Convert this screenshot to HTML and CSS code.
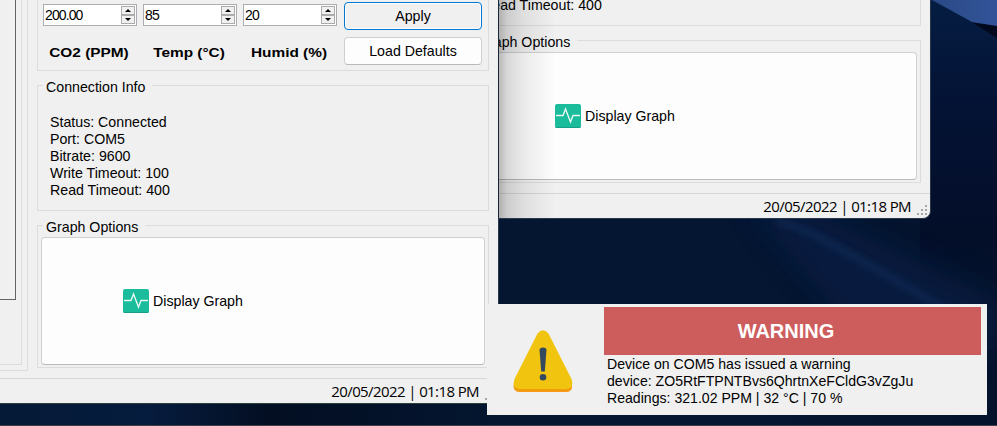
FILE: index.html
```html
<!DOCTYPE html>
<html lang="en">
<head>
<meta charset="utf-8">
<title>Sensor Monitor</title>
<link rel="stylesheet" href="styles.css">
</head>
<body>
<main class="desktop">
  <svg class="wallpaper" viewBox="0 0 997 426" preserveAspectRatio="none" aria-hidden="true">
    <defs>
      <linearGradient id="base" x1="0" y1="0" x2="1" y2="0">
        <stop offset="0" stop-color="#051a36"/><stop offset=".15" stop-color="#061c3e"/>
        <stop offset=".27" stop-color="#030e22"/><stop offset=".5" stop-color="#041630"/>
        <stop offset=".75" stop-color="#041632"/><stop offset="1" stop-color="#04132c"/>
      </linearGradient>
      <linearGradient id="side" x1="0" y1="0" x2="0" y2="1">
        <stop offset="0" stop-color="#051d42"/><stop offset=".4" stop-color="#041233"/><stop offset=".8" stop-color="#030e29"/><stop offset="1" stop-color="#030e29" stop-opacity="0"/>
      </linearGradient>
      <linearGradient id="petal" x1="0" y1="0" x2="1" y2="0">
        <stop offset="0" stop-color="#294984"/><stop offset="1" stop-color="#33549a"/>
      </linearGradient>
      <filter id="soft" filterUnits="userSpaceOnUse" x="600" y="100" width="500" height="350"><feGaussianBlur stdDeviation="14"/></filter>
      <filter id="streak" filterUnits="userSpaceOnUse" x="700" y="180" width="297" height="180"><feGaussianBlur stdDeviation="3"/></filter>
    </defs>
    <rect width="997" height="426" fill="url(#base)"/>
    <rect x="920" width="77" height="290" fill="url(#side)"/>
    <path d="M750 205L820 215L997 300V350H870Z" fill="#082450" opacity=".5" filter="url(#soft)"/>
    <path d="M775 220L810 232L888 276L950 312" fill="none" stroke="#163463" stroke-width="6" opacity=".5" filter="url(#streak)"/>
    <path d="M973 23L997 25V38Z" fill="#02091d"/>
    <path d="M932 0H997V26L972 22Z" fill="url(#petal)"/>
  </svg>

  <section class="window window-back">
    <div class="right-column">
      <div class="group info">
        <p class="lines">Read Timeout: 400</p>
      </div>
      <div class="group graph">
        <span class="legend">Graph Options</span>
        <button class="button graph-button">
          <svg class="pulse" viewBox="0 0 26 24"><rect width="26" height="24" rx="2" fill="#1abc9c"/><path d="M0 22Q0 24 2 24H24Q26 24 26 22L25 23H1Z" fill="#16a085"/><path d="M1 11.5H8L10.500 5L15.5 18L18 11.5H25" fill="none" stroke="#e4f7f2" stroke-width="1.4"/></svg>
          <span>Display Graph</span>
        </button>
      </div>
    </div>
    <footer class="status"><span>20/05/2022 | 01:18 PM</span>
      <svg class="grip" viewBox="0 0 10 10"><path d="M8 0h2v2H8zM4 4h2v2H4zM8 4h2v2H8zM0 8h2v2H0zM4 8h2v2H4zM8 8h2v2H8z" fill="#a5a5a5"/></svg>
    </footer>
  </section>

  <section class="window window-front">
    <div class="columns">
      <div class="frame-outer"><div class="frame-inner"><div class="plot"></div></div></div>
      <div class="right-column">
        <div class="group limits">
          <div class="field">
            <div class="spin"><span class="value">200.00</span><span class="arrows"><i class="up"></i><i class="down"></i></span></div>
            <b>CO2 (PPM)</b>
          </div>
          <div class="field">
            <div class="spin"><span class="value">85</span><span class="arrows"><i class="up"></i><i class="down"></i></span></div>
            <b>Temp (°C)</b>
          </div>
          <div class="field">
            <div class="spin"><span class="value">20</span><span class="arrows"><i class="up"></i><i class="down"></i></span></div>
            <b>Humid (%)</b>
          </div>
          <div class="actions">
            <button class="button apply">Apply</button>
            <button class="button">Load Defaults</button>
          </div>
        </div>
        <div class="group info">
          <span class="legend">Connection Info</span>
          <p class="lines">Status: Connected<br>Port: COM5<br>Bitrate: 9600<br>Write Timeout: 100<br>Read Timeout: 400</p>
        </div>
        <div class="group graph">
          <span class="legend">Graph Options</span>
          <button class="button graph-button">
            <svg class="pulse" viewBox="0 0 26 24"><rect width="26" height="24" rx="2" fill="#1abc9c"/><path d="M0 22Q0 24 2 24H24Q26 24 26 22L25 23H1Z" fill="#16a085"/><path d="M1 11.5H8L10.500 5L15.5 18L18 11.5H25" fill="none" stroke="#e4f7f2" stroke-width="1.4"/></svg>
            <span>Display Graph</span>
          </button>
        </div>
      </div>
    </div>
    <footer class="status"><span>20/05/2022 | 01:18 PM</span>
      <svg class="grip" viewBox="0 0 10 10"><path d="M8 0h2v2H8zM4 4h2v2H4zM8 4h2v2H8zM0 8h2v2H0zM4 8h2v2H4zM8 8h2v2H8z" fill="#a5a5a5"/></svg>
    </footer>
  </section>

  <aside class="toast">
    <svg class="alert" viewBox="0 0 60 63"><path d="M24.5 6Q30-1 35.500 6L58.500 52Q61 62 53 62H7Q-1 62 1 53Z" fill="#f39c12"/><path d="M24.500 3.500Q30-3 35.500 3.500L58.500 49Q61.500 59 53 59H7Q-1.500 59 1.500 49Z" fill="#f1c40f"/><path d="M26.500 20Q26.500 17.500 30 17.500T33.500 20L31.800 41.500H28.200Z" fill="#34495e"/><circle cx="30" cy="47.300" r="3.300" fill="#34495e"/></svg>
    <div class="message">
      <h1>WARNING</h1>
      <p>Device on COM5 has issued a warning<br>device: ZO5RtFTPNTBvs6QhrtnXeFCldG3vZgJu<br>Readings: 321.02 PPM | 32 °C | 70 %</p>
    </div>
  </aside>
</main>
</body>
</html>
```
FILE: styles.css
```css
* { box-sizing: border-box; }
body { margin: 0; font: 14.2px/17px "Liberation Sans", Arial, sans-serif; color: #000; }
p, h1 { margin: 0; }
.desktop { position: relative; width: 997px; height: 426px; overflow: hidden; border-bottom: 1px solid #3c3f47; background: #04132e; }
.wallpaper { display: block; width: 997px; height: 426px; }

.window { position: absolute; display: flex; flex-direction: column; width: 499px; background: #f0f0f0; overflow: hidden; border-right: 1px solid #27364a; }
.window-back { left: 432px; top: 0; height: 219px; border-bottom: 1px solid #27364a; border-bottom-right-radius: 8px; }
.window-front { left: 0; top: 0; height: 404px; border-bottom: 1px solid #27403f; }
.window-back::before { content: ""; position: absolute; z-index: 2; inset: 0 auto 0 66px; width: 58px; background: linear-gradient(90deg, rgba(0,0,0,.28), rgba(0,0,0,.15) 16%, rgba(0,0,0,.07) 45%, transparent); }

.columns { display: flex; height: 378px; }
.frame-outer { width: 28px; height: 371px; margin-right: 9px; padding: 0 5px 5px 0; border: solid #dcdcdc; border-width: 0 1px 1px 0; }
.frame-inner { width: 22px; height: 365px; border: solid #dcdcdc; border-width: 0 1px 1px 0; }
.plot { width: 16px; height: 300px; border: solid #646464; border-width: 0 1px 1px 0; }
.right-column { width: 452px; }
.window-back .right-column { margin-left: 37px; height: 193px; }

.group { border: 1px solid #dcdcdc; }
.legend { display: block; width: max-content; margin: -7px 0 0 5px; padding: 0 7px 0 3px; background: #f0f0f0; }
.limits { display: flex; gap: 6px; height: 71px; padding: 2px 6px 0 5px; border-top: 0; }
.field { width: 94px; padding-top: 2px; text-align: center; }
.spin { display: flex; justify-content: space-between; width: 94px; height: 22px; padding: 1px; border: 1px solid #abadb3; background: #fff; text-align: left; }
.value { font-size: 14px; line-height: 18px; letter-spacing: -.9px; }
.arrows { display: flex; flex-direction: column; width: 14px; }
.arrows i { display: flex; height: 9px; border: 1px solid #acacac; background: #f0f0f0; align-items: center; justify-content: center; }
.arrows i::before { content: ""; border: solid transparent; border-width: 0 3px; }
.arrows .up::before { border-bottom: 3px solid #000; }
.arrows .down::before { border-top: 3px solid #000; }
.field b { display: block; margin-top: 18px; font-size: 13.5px; transform: translateX(-1px) scaleX(1.14); white-space: nowrap; }
.actions { display: flex; flex-direction: column; gap: 7px; width: 138px; margin-left: 1px; }
.button { height: 28px; padding: 0; border: 1px solid #d0d0d0; border-bottom-color: #bababa; border-radius: 4px; background: #fdfdfd; color: #000; font: inherit; }
.apply { border-color: #0078d4; box-shadow: inset 0 0 0 1px #fdfdfd; background: #f0f0f0; }

.info { height: 126px; margin-top: 14px; }
.lines { padding: 18px 0 0 12px; }
.window-back .info { display: flex; align-items: flex-end; height: 26px; margin: 0; border-top: 0; }
.window-back .lines { padding: 0 0 11px 12px; }
.graph { height: 143px; margin-top: 14px; }
.graph-button { display: flex; align-items: center; width: 444px; height: 128px; margin: 1px 0 0 3px; padding-left: 81px; }
.pulse { width: 26px; height: 24px; margin-right: 4px; }
.status { display: flex; justify-content: flex-end; height: 25px; border-top: 1px solid #d7d7d7; padding-right: 3px; font: 15px/24px "Open Sans", "Noto Sans", sans-serif; letter-spacing: -.600px; white-space: nowrap; }
.grip { width: 10px; height: 10px; margin: 11px 0 0 6px; }

.toast { position: absolute; left: 487px; top: 304px; display: flex; width: 500px; height: 111px; padding: 3px 6px 0 26px; background: #f0f0f0; }
.alert { flex: none; width: 60px; height: 63px; margin: 23px 31px 0 0; }
.message { width: 377px; white-space: nowrap; font-size: 14.1px; }
.message h1 { height: 48px; padding-right: 13px; background: #cd5c5c; color: #fff; text-align: center; font-size: 20px; line-height: 49px; }
.message p { padding: 1px 0 0 3px; }
```
